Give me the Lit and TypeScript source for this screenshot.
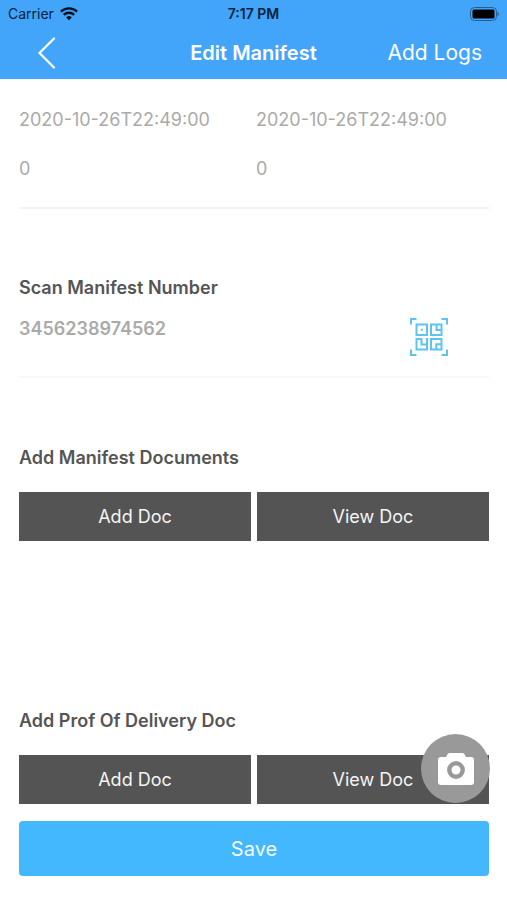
import { LitElement, html, css } from "lit";
import { customElement, property } from "lit/decorators.js";

@customElement("status-bar")
class StatusBar extends LitElement {
  static styles = css`
    :host {
      display: grid;
      grid-template-columns: 1fr auto 1fr;
      align-items: center;
      height: 28px;
      padding: 0 8px;
      color: #06223c;
      font-size: 14px;
      line-height: 20px;
    }
    .carrier {
      display: flex;
      align-items: center;
      gap: 6px;
    }
    .time {
      font-weight: 600;
    }
    .battery {
      justify-self: end;
    }
    svg {
      display: block;
    }
  `;

  render() {
    return html`
      <span class="carrier">
        Carrier
        <svg width="18" height="14" viewBox="0 0 18 14" fill="none" stroke="#04121f" stroke-width="2.4" aria-hidden="true">
          <path d="M0.9 4.7a11.5 11.5 0 0 1 16.2 0" />
          <path d="M3.8 7.9a7.400 7.400 0 0 1 10.400 0" />
          <path d="M9 13.2 6.200 10.400a4 4 0 0 1 5.600 0Z" fill="#04121f" stroke="none" />
        </svg>
      </span>
      <span class="time">7:17 PM</span>
      <svg class="battery" width="29" height="14" viewBox="0 0 29 14" aria-hidden="true">
        <rect x="0.5" y="0.5" width="26" height="13" rx="4" fill="none" stroke="#245f92" />
        <rect x="2.5" y="2.5" width="22" height="9" rx="1.5" fill="#000" />
        <path d="M27.500 4.800c1.800.6 1.800 3.800 0 4.400Z" fill="#245f92" />
      </svg>
    `;
  }
}

@customElement("document-section")
class DocumentSection extends LitElement {
  @property() heading = "";

  static styles = css`
    h2 {
      margin: 0 0 22px;
      color: #555;
      font-size: 18px;
      font-weight: 600;
      line-height: 24px;
    }
    .actions {
      display: grid;
      grid-template-columns: 1fr 1fr;
      gap: 6px;
    }
    button {
      height: 49px;
      padding: 0;
      border: 0;
      background: #545454;
      color: #f4f4f4;
      font: inherit;
      font-size: 18px;
    }
  `;

  render() {
    return html`
      <h2>${this.heading}</h2>
      <div class="actions">
        <button type="button">Add Doc</button>
        <button type="button">View Doc</button>
      </div>
    `;
  }
}

@customElement("app-root")
class AppRoot extends LitElement {
  static styles = css`
    :host {
      display: block;
      min-height: 100vh;
      background: #fff;
      font-family: Inter, "Liberation Sans", sans-serif;
    }
    * {
      box-sizing: border-box;
    }
    header {
      background: #42a5fa;
      color: #fff;
    }
    svg {
      display: block;
    }
    nav {
      display: grid;
      grid-template-columns: 1fr auto 1fr;
      align-items: center;
      height: 51px;
      padding: 0 25px 2px;
    }
    nav button {
      padding: 0;
      border: 0;
      background: none;
      color: inherit;
      font: inherit;
      font-size: 21px;
    }
    .back {
      justify-self: start;
      padding: 0 12px;
    }
    .logs {
      justify-self: end;
    }
    h1 {
      margin: 0;
      font-size: 20px;
      font-weight: 600;
      line-height: 28px;
    }
    main {
      padding: 16px 18px 24px 19px;
    }
    .values {
      display: grid;
      grid-template-columns: 1fr 1fr;
      column-gap: 4px;
      padding-bottom: 14px;
      border-bottom: 2px solid #f3f3f3;
      color: #aaa;
      font-size: 18px;
      line-height: 49px;
    }
    .scan {
      display: grid;
      grid-template-columns: 1fr auto;
      grid-template-rows: 24px auto;
      row-gap: 16px;
      height: 102px;
      margin-top: 67px;
      padding-right: 41px;
      border-bottom: 2px solid #f7f7f7;
    }
    label {
      grid-column: 1 / -1;
      color: #555;
      font-size: 18px;
      font-weight: 600;
      line-height: 24px;
    }
    input {
      width: 100%;
      height: 24px;
      padding: 0;
      border: 0;
      outline: 0;
      background: none;
      color: #aaa;
      font: inherit;
      font-size: 18px;
      font-weight: 600;
    }
    .qr {
      align-self: start;
      padding: 2px 0 0;
      border: 0;
      background: none;
    }
    .manifest-docs {
      display: block;
      margin-top: 68px;
    }
    .delivery-docs {
      display: block;
      margin-top: 168px;
    }
    .save {
      width: 100%;
      height: 55px;
      margin-top: 17px;
      border: 0;
      border-radius: 4px;
      background: #43b8ff;
      color: #f4faff;
      font: inherit;
      font-size: 20px;
    }
    .camera {
      position: fixed;
      right: 17px;
      bottom: 97px;
      display: grid;
      place-items: center;
      width: 69px;
      height: 69px;
      padding: 0;
      border: 0;
      border-radius: 50%;
      background: #999;
    }
  `;

  render() {
    return html`
      <header>
        <status-bar></status-bar>
        <nav>
          <button class="back" type="button" aria-label="Back">
            <svg width="20" height="32" viewBox="0 0 20 32" fill="none" stroke="#fff" stroke-width="2.2" stroke-linecap="round" stroke-linejoin="round">
              <path d="M17 1.500 2.500 16 17 30.500" />
            </svg>
          </button>
          <h1>Edit Manifest</h1>
          <button class="logs" type="button">Add Logs</button>
        </nav>
      </header>
      <main>
        <div class="values">
          <span>2020-10-26T22:49:00</span>
          <span>2020-10-26T22:49:00</span>
          <span>0</span>
          <span>0</span>
        </div>
        <div class="scan">
          <label for="number">Scan Manifest Number</label>
          <input id="number" type="text" inputmode="numeric" value="3456238974562" />
          <button class="qr" type="button" aria-label="Scan code">
            <svg width="38" height="38" viewBox="0 0 38 38" fill="none" stroke="#5cc4f0" stroke-width="2">
              <path d="M1 6.500V1H6.500M31.500 1H37V6.500M37 31.500V37H31.500M6.500 37H1V31.500" />
              <path d="M6.500 6.500H17V17H6.500ZM10.800 11.800H12.800" />
              <path d="M26.500 6.500H21V17H31.500V6.500H26.500V12H31.500" />
              <path d="M17 20V31.500H6.500V21H11.500V26.500H17" />
              <path d="M21 21H31.500V31.500H21ZM26.300 31.500V26.300H31.500" />
            </svg>
          </button>
        </div>
        <document-section class="manifest-docs" heading="Add Manifest Documents"></document-section>
        <document-section class="delivery-docs" heading="Add Prof Of Delivery Doc"></document-section>
        <button class="save" type="button">Save</button>
      </main>
      <button class="camera" type="button" aria-label="Take photo">
        <svg width="38" height="34" viewBox="0 0 38 34">
          <path d="M4 5H9L10.500 2.200Q11.300 1 12.800 1H25.200Q26.700 1 27.500 2.200L29 5H34Q37 5 37 8V30Q37 33 34 33H4Q1 33 1 30V8Q1 5 4 5Z" fill="#fff" />
          <circle cx="19" cy="18" r="6.700" fill="#fff" stroke="#999" stroke-width="4.400" />
        </svg>
      </button>
    `;
  }
}
